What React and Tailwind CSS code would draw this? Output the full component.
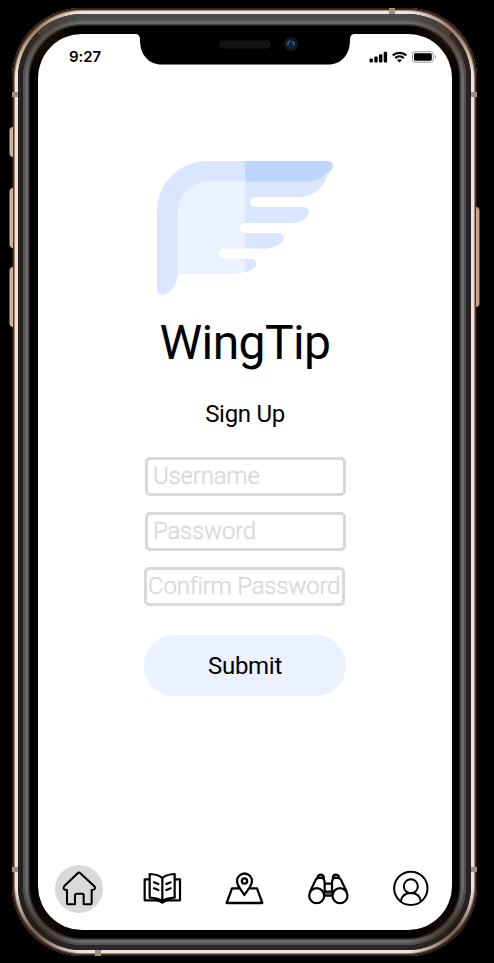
const iconProps = {
  className: "h-12 w-12",
  fill: "none",
  stroke: "#000",
  strokeLinejoin: "round",
  strokeLinecap: "round",
};

function WingLogo() {
  return (
    <svg className="h-[155px] w-[200px]" viewBox="0 0 600 465">
      <path d="M98 187A92 92 0 0 1 190 95H300V366Q286 372 266 372H98Z" fill="#ebf1ff" />
      <path d="M36 184A151 151 0 0 1 187 33H300V95H190A92 92 0 0 0 98 187V373C98 402 78 430 54 435Q36 436 36 417Z" fill="#dae6ff" />
      <path d="M300 95H485L548 70C540 110 508 141 462 141H300ZM300 141H340V171H477Q491 173 492 187C490 200 472 219 445 219H300ZM300 249H402Q416 251 417 265C415 277 390 296 362 296H300ZM300 326H318Q333 328 334 342C334 353 315 362 300 366Z" fill="#dae6ff" />
      <path d="M300 33H550Q563 34 564 48C563 64 524 95 485 95H300Z" fill="#bdd6ff" />
      <path d="M470 141H330a15 15 0 0 0 0 30H470ZM440 219H300a15 15 0 0 0 0 30H440ZM340 296H237a15 15 0 0 0 0 30H340Z" fill="#fff" />
    </svg>
  );
}

function StatusBar() {
  return (
    <div className="flex h-[46px] items-center justify-between pl-[31px] pr-[15px]">
      <span className="mb-0.5 font-['Inter',sans-serif] text-[15px] font-semibold leading-none tracking-[-0.1px]">9:27</span>
      <svg className="h-3 w-[68px]" viewBox="0 0 68 12">
        <rect x="0.5" y="7.5" width="3.4" height="4" rx="1" />
        <rect x="5.3" y="5.5" width="3.4" height="6" rx="1" />
        <rect x="10" y="3.2" width="3.4" height="8.3" rx="1" />
        <rect x="14.7" y="0.7" width="3.4" height="10.8" rx="1" />
        <path d="M23.700 4.300a10.500 10.500 0 0 1 13.600 0M26.200 7.100a6.500 6.500 0 0 1 8.600 0" fill="none" stroke="#000" strokeWidth="2.2" />
        <path d="M28 9.100Q30.500 7.400 33 9.100L30.500 11.600Z" />
        <rect x="43.500" y="0.8" width="20.800" height="10.400" rx="2.500" fill="none" stroke="#999" strokeWidth="1" />
        <rect x="45" y="2.300" width="17.800" height="7.400" rx="1.400" />
        <path d="M66 4v3.600q1.200-.6 1.200-1.800T66 4" fill="#999" />
      </svg>
    </div>
  );
}

function HomeIcon() {
  return (
    <svg {...iconProps} viewBox="31 30 144 144" strokeWidth="6.2">
      <path d="M99 54.500Q103 51 107 54.500L149 94Q153 98 150 102Q148 105 141 105V143Q141 148 136 148H117V120Q117 116 113 116H97Q91 116 91 121V148H72Q67 148 67 143V105Q59 105 57 101Q56 97 59 93Z" />
    </svg>
  );
}

function BookIcon() {
  return (
    <svg {...iconProps} viewBox="280 30 144 144" strokeWidth="6.6">
      <path d="M315 57Q341 58 353 69Q365 58 390 57V128Q365 129 353 139Q341 129 315 128ZM353 69V139M313 73H300V136H333Q345 136 353 143Q361 136 373 136H406V73H392" />
      <path d="M328 82L341 87M328 100L341 105M378 82L365 87M378 100L365 105" />
    </svg>
  );
}

function MapIcon() {
  return (
    <svg {...iconProps} viewBox="18 30 144 144" strokeWidth="6.8">
      <path d="M88 120C79 105 66 93 66 78A22.500 22.500 0 0 1 111 78C111 93 97 105 88 120Z" />
      <circle cx="88.500" cy="78" r="8" />
      <path d="M72 100H51L35 144H142L126 100H105" />
    </svg>
  );
}

function BinocularsIcon() {
  return (
    <svg {...iconProps} viewBox="266 30 144 144" strokeWidth="6.6">
      <circle cx="304" cy="122" r="22.500" />
      <circle cx="374" cy="122" r="22.500" />
      <path d="M285 108L302 73Q307 68 320 68Q328 73 328 82V121M393 108L376 73Q371 68 358 68Q350 73 350 82V121M306 70Q307 59 318 59Q326 60 326 74M372 70Q371 59 360 59Q352 60 352 74M328 86H350M328 110H350M328 122H350" />
      <path d="M330 116H348" strokeWidth="5" stroke="#444" />
    </svg>
  );
}

function UserIcon() {
  return (
    <svg {...iconProps} viewBox="515 30 144 144" strokeWidth="6">
      <circle cx="586.500" cy="100" r="50" />
      <circle cx="586.500" cy="94" r="21" />
      <path d="M556 139C559 123 570 114 586.500 114S614 123 617 139" />
    </svg>
  );
}

const fieldClass =
  "h-[39px] w-[201px] rounded-[5px] border-[3px] border-[#d9d9d9] bg-white pb-0.5 font-light text-2xl tracking-[-0.2px] text-black outline-none [-webkit-text-stroke:0.4px] placeholder:text-[#d9d9d9]";

function SignUpForm() {
  return (
    <form className="flex w-[202px] flex-col" onSubmit={(e) => e.preventDefault()}>
      <input className={`${fieldClass} ml-px pl-[5px]`} placeholder="Username" />
      <input className={`${fieldClass} ml-px mt-4 pl-[5px]`} placeholder="Password" />
      <input className={`${fieldClass} mt-4 pl-[1px]`} placeholder="Confirm Password" />
      <button className="mt-[29px] h-[61px] rounded-full bg-[#ebf1ff] text-2xl tracking-[-0.3px]">Submit</button>
    </form>
  );
}

function Notch() {
  return (
    <svg className="absolute left-[98px] top-[-1px] h-8 w-[218px]" viewBox="0 0 218 32">
      <path d="M0 0V1Q4 1.500 4 7C4 21 12 31.500 26 31.500H192C206 31.500 214 21 214 7Q214 1.500 218 1V0Z" />
      <rect x="83" y="7.500" width="52" height="8" rx="4" fill="#131313" />
      <circle cx="155" cy="11" r="7" fill="#15171a" />
      <circle cx="155" cy="11" r="4.300" fill="#10233c" />
      <path d="M152 12a3 3 0 0 1 2-4M156 8.500a3 3 0 0 1 2 4" stroke="#285f99" strokeWidth="1.600" fill="none" />
    </svg>
  );
}

export default function App() {
  return (
    <div className="h-[963px] w-[494px] overflow-hidden bg-black pl-3 pt-2 font-['Roboto',sans-serif] text-black">
      <div className="relative h-[948px] w-[465px] rounded-[70px] bg-black p-[6px] shadow-[inset_0_0_0_1px_#281a12,inset_0_0_0_2px_#4c3527,inset_0_0_0_3px_#a58672,inset_0_0_0_6px_#eee3df]">
        <div className="h-full rounded-[64px] border-[5px] border-b-[#292929] border-l-[#242424] border-r-[#242424] border-t-[#494c49]">
          <div className="h-full rounded-[59px] bg-black shadow-[inset_0_0_0_2px_#515151,inset_0_0_0_5px_#686868,inset_0_0_0_6px_#444,inset_0_0_0_7px_#1b1b1b]" />
        </div>
        {/* Corner shading of the metal band */}
        <div className="absolute inset-0 rounded-[70px] bg-[radial-gradient(circle_at_18px_18px,#4a2c18a0,transparent_48px),radial-gradient(circle_at_447px_18px,#4a2c18a0,transparent_48px),radial-gradient(circle_at_18px_930px,#2a180cc0,transparent_50px),radial-gradient(circle_at_447px_930px,#2a180cc0,transparent_50px)]" />

        <div className="absolute -left-[3px] top-[119px] h-[30px] w-1 rounded-l-sm border-l border-[#6e5848] bg-[#cfb5a2]" />
        <div className="absolute -left-[3px] top-[180px] h-[60px] w-1 rounded-l-sm border-l border-[#6e5848] bg-[#cfb5a2]" />
        <div className="absolute -left-[3px] top-[259px] h-[60px] w-1 rounded-l-sm border-l border-[#6e5848] bg-[#cfb5a2]" />
        <div className="absolute -right-[3px] top-[199px] h-[100px] w-1 rounded-r-sm border-r border-[#60442f] bg-[#c5a38b]" />
        <div className="absolute left-0 top-[84px] h-[5px] w-[6px] bg-[#a58c7f]" />
        <div className="absolute right-0 top-[84px] h-[5px] w-[6px] bg-[#a58c7f]" />
        <div className="absolute left-0 top-[859px] h-[5px] w-[6px] bg-[#a58c7f]" />
        <div className="absolute right-0 top-[859px] h-[5px] w-[6px] bg-[#a58c7f]" />
        <div className="absolute left-[377px] top-0 h-[6px] w-[6px] bg-[#a58c7f]" />
        <div className="absolute bottom-0 left-[83px] h-[6px] w-[6px] bg-[#a58c7f]" />

        <main className="absolute left-[26px] top-[26px] flex h-[896px] w-[414px] flex-col rounded-[44px] bg-white">
          <Notch />
          <StatusBar />
          <div className="flex flex-1 flex-col items-center pt-[70px]">
            <WingLogo />
            <h1 className="mt-[10px] text-5xl leading-[56px] tracking-[-0.6px]">WingTip</h1>
            <h2 className="mb-[29px] mt-[29px] text-2xl leading-7 tracking-[-0.3px]">Sign Up</h2>
            <SignUpForm />
          </div>
          <nav className="mb-[17px] grid h-12 grid-cols-5 justify-items-center">
            <a className="rounded-full bg-[#d9d9d9]"><HomeIcon /></a>
            <a><BookIcon /></a>
            <a><MapIcon /></a>
            <a><BinocularsIcon /></a>
            <a><UserIcon /></a>
          </nav>
        </main>
      </div>
    </div>
  );
}
